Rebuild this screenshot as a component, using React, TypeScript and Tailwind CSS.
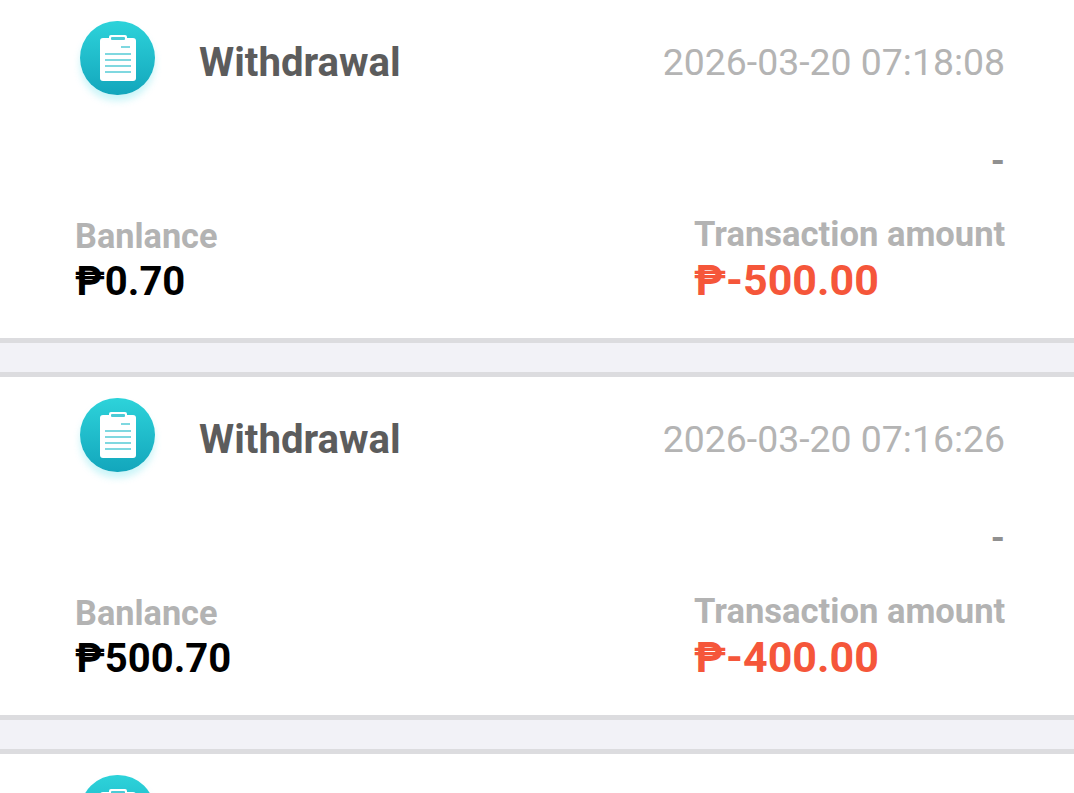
const records = [
  { time: "2026-03-20 07:18:08", balance: "₱0.70", amount: "₱-500.00" },
  { time: "2026-03-20 07:16:26", balance: "₱500.70", amount: "₱-400.00" },
];

function ClipboardIcon() {
  return (
    <div className="flex h-[74px] w-[75px] shrink-0 items-center justify-center rounded-full bg-gradient-to-b from-[#2dd3da] to-[#12a6bc] shadow-[0_6px_7px_rgba(70,220,230,0.28)]">
      <svg width="38" height="46" viewBox="0 0 38 46" fill="none" className="blur-[0.4px]">
        <rect x="1" y="3" width="36" height="43" rx="3" fill="#fff" />
        <rect x="10" y="0" width="18" height="7" rx="2" fill="#fff" />
        <rect x="12" y="2" width="14" height="3" rx="1" fill="#4ccbd6" />
        <rect x="22" y="11" width="9" height="2" fill="#7fd8e0" />
        <rect x="6" y="18" width="26" height="2" fill="#7fd8e0" />
        <rect x="6" y="24" width="26" height="2" fill="#7fd8e0" />
        <rect x="6" y="30" width="26" height="2" fill="#7fd8e0" />
        <rect x="6" y="36" width="26" height="2" fill="#7fd8e0" />
      </svg>
    </div>
  );
}

function RecordCard({ time, balance, amount }: { time: string; balance: string; amount: string }) {
  return (
    <div className="h-[343px] shrink-0 border-b-[5px] border-[#dcdcdf] bg-white pl-[75px] pr-[69px]">
      <div className="flex h-[125px] items-start justify-between">
        <div className="flex items-start">
          <div className="ml-[5px] mt-[21px]">
            <ClipboardIcon />
          </div>
          <span className="ml-[44px] mt-[39px] text-[40.2px] font-bold leading-[47px] text-[#5c5c5c]">Withdrawal</span>
        </div>
        <span className="mt-[40px] text-[37.4px] leading-[44px] text-[#b4b4b4]">{time}</span>
      </div>
      <div className="text-right text-[36px] font-bold leading-[72px] text-[#909090]">-</div>
      <div className="flex items-start justify-between pt-[18px]">
        <div className="mt-[2px]">
          <div className="text-[34.3px] font-bold leading-[38px] text-[#b3b3b3]">Banlance</div>
          <div className="mt-[3px] text-[40px] font-bold leading-[48px] text-black">{balance}</div>
        </div>
        <div className="w-[311px]">
          <div className="whitespace-nowrap text-[34.6px] font-bold leading-[38px] text-[#b3b3b3]">Transaction amount</div>
          <div className="text-[43px] font-bold leading-[54px] text-[#f5563a]">{amount}</div>
        </div>
      </div>
    </div>
  );
}

export default function App() {
  return (
    <div className="flex h-[793px] w-full flex-col overflow-hidden bg-[#f2f2f7] font-['Roboto',sans-serif]">
      {records.map((r, i) => (
        <div key={r.time} className={i > 0 ? "mt-[29px] border-t-[5px] border-[#dcdcdf]" : ""}>
          <RecordCard {...r} />
        </div>
      ))}
      <div className="mt-[29px] border-t-[5px] border-[#dcdcdf] bg-white pl-[80px] pt-[21px]">
        <ClipboardIcon />
      </div>
    </div>
  );
}
